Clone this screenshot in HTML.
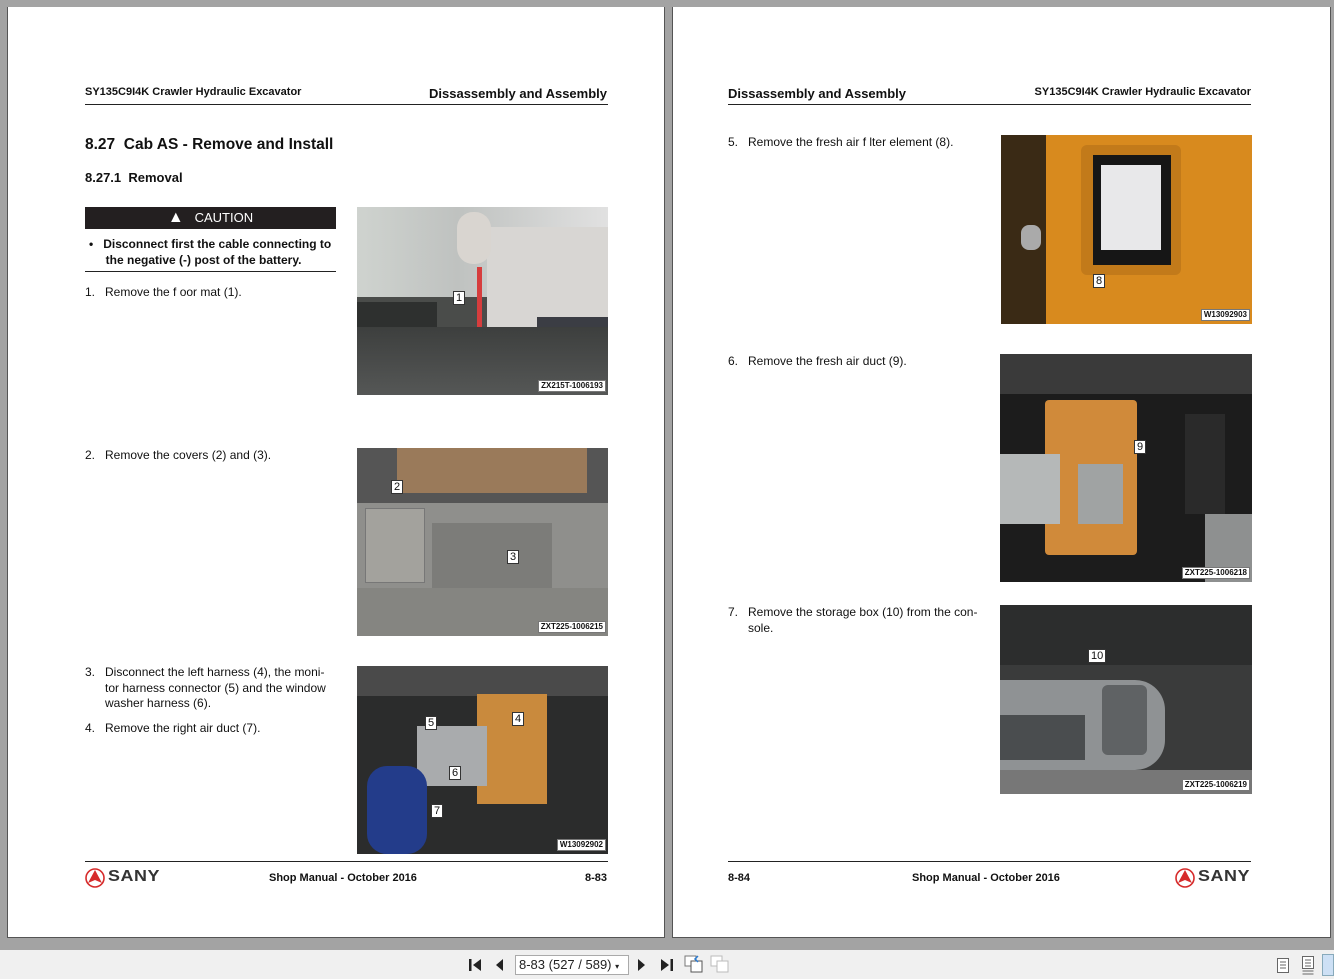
<!DOCTYPE html>
<html><head><meta charset="utf-8"><style>
*{margin:0;padding:0;box-sizing:border-box}
body{width:1334px;height:979px;background:#a3a3a3;font-family:"Liberation Sans",Arial,sans-serif;position:relative;overflow:hidden;color:#111}
.page{position:absolute;top:7px;height:931px;background:#fff;border:1px solid #555;border-top:none}
.a{position:absolute}
.hdr{font-size:11px;font-weight:bold}
.hdr2{font-size:13px;font-weight:bold}
.rule{position:absolute;height:1px;background:#222}
.t{position:absolute;font-size:12px;line-height:15.5px}
.ph{position:absolute;overflow:hidden}
.lbl{position:absolute;background:#fff;font-size:8px;padding:0 2px;border:1px solid #777;line-height:10px;font-weight:bold}
.num{position:absolute;background:#fff;font-size:11px;padding:0 2px;line-height:12px;border:1px solid #333}
.b{position:absolute}
.tb{position:absolute;left:0;top:950px;width:1334px;height:29px;background:#f0f0f0}
.sany{position:absolute;font-size:16px;font-weight:bold;color:#333;letter-spacing:0.5px;transform:scaleX(1.12);transform-origin:left}
</style></head><body>

<div class="page" style="left:7px;width:658px">
 <div class="a hdr" style="left:77px;top:79px">SY135C9I4K Crawler Hydraulic Excavator</div>
 <div class="a hdr2" style="right:57px;top:79px">Dissassembly and Assembly</div>
 <div class="rule" style="left:77px;top:97px;width:523px"></div>
 <div class="a" style="left:77px;top:129px;font-size:15.5px;font-weight:bold">8.27&nbsp; Cab AS - Remove and Install</div>
 <div class="a" style="left:77px;top:163px;font-size:13px;font-weight:bold">8.27.1&nbsp; Removal</div>
 <div class="a" style="left:77px;top:200px;width:251px;height:22px;background:#231f20;color:#fff;font-size:13px;text-align:center;line-height:22px"><span style="font-size:16px">&#9650;</span>&nbsp;&nbsp; CAUTION</div>
 <div class="a" style="left:81px;top:229px;font-size:12px;font-weight:bold;line-height:16px">•&nbsp;&nbsp; Disconnect first the cable connecting to<br>&nbsp;&nbsp;&nbsp;&nbsp;&nbsp;the negative (-) post of the battery.</div>
 <div class="rule" style="left:77px;top:264px;width:251px"></div>
 <div class="t" style="left:77px;top:278px">1.&nbsp;&nbsp; Remove the f oor mat (1).</div>
 <div class="t" style="left:77px;top:441px">2.&nbsp;&nbsp; Remove the covers (2) and (3).</div>
 <div class="t" style="left:77px;top:658px">3.&nbsp;&nbsp; Disconnect the left harness (4), the moni-<br>&nbsp;&nbsp;&nbsp;&nbsp;&nbsp; tor harness connector (5) and the window<br>&nbsp;&nbsp;&nbsp;&nbsp;&nbsp; washer harness (6).</div>
 <div class="t" style="left:77px;top:714px">4.&nbsp;&nbsp; Remove the right air duct (7).</div>

 <div class="ph" style="left:349px;top:200px;width:251px;height:188px;background:#4a4c4a">
  <div class="b" style="left:0;top:0;width:251px;height:90px;background:linear-gradient(90deg,#cfd3cf,#bfc2c0 40%,#e1e1e1)"></div>
  <div class="b" style="left:130px;top:20px;width:121px;height:100px;background:#d8d6d3"></div>
  <div class="b" style="left:100px;top:5px;width:34px;height:52px;background:#d9d5d0;border-radius:16px"></div>
  <div class="b" style="left:120px;top:60px;width:5px;height:70px;background:#d63d3d"></div>
  <div class="b" style="left:180px;top:110px;width:71px;height:50px;background:#3b3d44"></div>
  <div class="b" style="left:0;top:95px;width:80px;height:80px;background:#2e302f"></div>
  <div class="b" style="left:0;top:120px;width:251px;height:68px;background:linear-gradient(#3d3f3e,#555756)"></div>
  <div class="num" style="left:96px;top:84px">1</div>
  <div class="lbl" style="right:2px;bottom:3px">ZX215T-1006193</div>
 </div>

 <div class="ph" style="left:349px;top:441px;width:251px;height:188px;background:#8f8f8c">
  <div class="b" style="left:0;top:0;width:251px;height:55px;background:#555"></div>
  <div class="b" style="left:40px;top:0;width:190px;height:45px;background:#9a7a5a"></div>
  <div class="b" style="left:8px;top:60px;width:60px;height:75px;background:#a3a29d;border:1px solid #777"></div>
  <div class="b" style="left:75px;top:75px;width:120px;height:70px;background:#7c7c79"></div>
  <div class="b" style="left:0;top:140px;width:251px;height:48px;background:#858581"></div>
  <div class="num" style="left:34px;top:32px">2</div>
  <div class="num" style="left:150px;top:102px">3</div>
  <div class="lbl" style="right:2px;bottom:3px">ZXT225-1006215</div>
 </div>

 <div class="ph" style="left:349px;top:659px;width:251px;height:188px;background:#2b2c2c">
  <div class="b" style="left:0;top:0;width:251px;height:30px;background:#4a4a4a"></div>
  <div class="b" style="left:120px;top:28px;width:70px;height:110px;background:#c98a3d"></div>
  <div class="b" style="left:60px;top:60px;width:70px;height:60px;background:#a9abad"></div>
  <div class="b" style="left:10px;top:100px;width:60px;height:88px;background:#233c8a;border-radius:20px"></div>
  <div class="num" style="left:68px;top:50px">5</div>
  <div class="num" style="left:155px;top:46px">4</div>
  <div class="num" style="left:92px;top:100px">6</div>
  <div class="num" style="left:74px;top:138px">7</div>
  <div class="lbl" style="right:2px;bottom:3px">W13092902</div>
 </div>

 <div class="rule" style="left:77px;top:854px;width:523px"></div>
 <svg class="a" style="left:77px;top:861px" width="20" height="20" viewBox="0 0 20 20"><circle cx="10" cy="10" r="9" fill="none" stroke="#d62b2b" stroke-width="1.6"/><path d="M10 2 L17 15 L10 12 L3 15 Z" fill="#d62b2b"/></svg>
 <div class="sany" style="left:100px;top:861px">SANY</div>
 <div class="a" style="left:261px;top:865px;font-size:11px;font-weight:bold">Shop Manual - October 2016</div>
 <div class="a" style="right:57px;top:865px;font-size:11px;font-weight:bold">8-83</div>
</div>

<div class="page" style="left:672px;width:659px">
 <div class="a hdr2" style="left:55px;top:79px">Dissassembly and Assembly</div>
 <div class="a hdr" style="right:79px;top:79px">SY135C9I4K Crawler Hydraulic Excavator</div>
 <div class="rule" style="left:55px;top:97px;width:523px"></div>
 <div class="t" style="left:55px;top:128px">5.&nbsp;&nbsp; Remove the fresh air f lter element (8).</div>
 <div class="t" style="left:55px;top:347px">6.&nbsp;&nbsp; Remove the fresh air duct (9).</div>
 <div class="t" style="left:55px;top:598px">7.&nbsp;&nbsp; Remove the storage box (10) from the con-<br>&nbsp;&nbsp;&nbsp;&nbsp;&nbsp; sole.</div>

 <div class="ph" style="left:328px;top:128px;width:251px;height:189px;background:#d88a1e">
  <div class="b" style="left:0;top:0;width:45px;height:189px;background:#3a2a15"></div>
  <div class="b" style="left:80px;top:10px;width:100px;height:130px;background:#c27a1a;border-radius:6px"></div>
  <div class="b" style="left:92px;top:20px;width:78px;height:110px;background:#161616"></div>
  <div class="b" style="left:100px;top:30px;width:60px;height:85px;background:#e8e8ea"></div>
  <div class="b" style="left:20px;top:90px;width:20px;height:25px;background:#aaa;border-radius:8px"></div>
  <div class="num" style="left:92px;top:139px">8</div>
  <div class="lbl" style="right:2px;bottom:3px">W13092903</div>
 </div>

 <div class="ph" style="left:327px;top:347px;width:252px;height:228px;background:#1c1c1c">
  <div class="b" style="left:0;top:0;width:252px;height:40px;background:#3a3a3a"></div>
  <div class="b" style="left:45px;top:46px;width:92px;height:155px;background:#d08a3a;border-radius:4px"></div>
  <div class="b" style="left:0;top:100px;width:60px;height:70px;background:#b5b8b8"></div>
  <div class="b" style="left:78px;top:110px;width:45px;height:60px;background:#a0a3a3"></div>
  <div class="b" style="left:185px;top:60px;width:40px;height:100px;background:#2a2a2a"></div>
  <div class="b" style="left:205px;top:160px;width:47px;height:68px;background:#8e9090"></div>
  <div class="num" style="left:134px;top:86px">9</div>
  <div class="lbl" style="right:2px;bottom:3px">ZXT225-1006218</div>
 </div>

 <div class="ph" style="left:327px;top:598px;width:252px;height:189px;background:#3a3b3b">
  <div class="b" style="left:0;top:0;width:252px;height:60px;background:#2c2d2d"></div>
  <div class="b" style="left:0;top:75px;width:165px;height:90px;background:#8f9294;border-radius:0 30px 30px 0"></div>
  <div class="b" style="left:102px;top:80px;width:45px;height:70px;background:#5f6264;border-radius:6px"></div>
  <div class="b" style="left:0;top:110px;width:85px;height:45px;background:#4a4d4f"></div>
  <div class="b" style="left:0;top:165px;width:252px;height:24px;background:#777"></div>
  <div class="num" style="left:88px;top:44px">10</div>
  <div class="lbl" style="right:2px;bottom:3px">ZXT225-1006219</div>
 </div>

 <div class="rule" style="left:55px;top:854px;width:523px"></div>
 <div class="a" style="left:55px;top:865px;font-size:11px;font-weight:bold">8-84</div>
 <div class="a" style="left:239px;top:865px;font-size:11px;font-weight:bold">Shop Manual - October 2016</div>
 <svg class="a" style="left:502px;top:861px" width="20" height="20" viewBox="0 0 20 20"><circle cx="10" cy="10" r="9" fill="none" stroke="#d62b2b" stroke-width="1.6"/><path d="M10 2 L17 15 L10 12 L3 15 Z" fill="#d62b2b"/></svg>
 <div class="sany" style="left:525px;top:861px">SANY</div>
</div>

<div class="tb">
 <svg class="a" style="left:468px;top:8px" width="14" height="14" viewBox="0 0 14 14"><rect x="1" y="1" width="2.5" height="12" fill="#222"/><path d="M13 1 L5 7 L13 13Z" fill="#222"/></svg>
 <svg class="a" style="left:494px;top:8px" width="10" height="14" viewBox="0 0 10 14"><path d="M9 1 L2 7 L9 13Z" fill="#222"/></svg>
 <div class="a" style="left:515px;top:5px;width:114px;height:20px;background:#fff;border:1px solid #aaa;font-size:13px;line-height:18px;padding-left:3px;color:#222">8-83 (527 / 589) <span style="font-size:8px">▾</span></div>
 <svg class="a" style="left:637px;top:8px" width="10" height="14" viewBox="0 0 10 14"><path d="M1 1 L8 7 L1 13Z" fill="#222"/></svg>
 <svg class="a" style="left:660px;top:8px" width="14" height="14" viewBox="0 0 14 14"><path d="M1 1 L9 7 L1 13Z" fill="#222"/><rect x="10.5" y="1" width="2.5" height="12" fill="#222"/></svg>
 <svg class="a" style="left:684px;top:5px" width="20" height="18" viewBox="0 0 20 18"><rect x="1" y="1" width="11" height="10" fill="#fff" stroke="#777"/><rect x="7" y="6" width="11" height="11" fill="#fff" stroke="#555"/><path d="M14 1 L11 4 L14 7" fill="none" stroke="#2a7ad0" stroke-width="1.5"/></svg>
 <svg class="a" style="left:710px;top:5px" width="20" height="18" viewBox="0 0 20 18"><rect x="1" y="1" width="11" height="10" fill="#fff" stroke="#bbb"/><rect x="7" y="6" width="11" height="11" fill="#fff" stroke="#bbb"/></svg>
 <svg class="a" style="left:1277px;top:8px" width="12" height="15" viewBox="0 0 12 15"><rect x="0.5" y="0.5" width="11" height="14" fill="#fff" stroke="#666"/><path d="M3 4h6M3 7h6M3 10h6" stroke="#666"/></svg>
 <svg class="a" style="left:1302px;top:6px" width="12" height="19" viewBox="0 0 12 19"><rect x="0.5" y="0.5" width="11" height="12" fill="#fff" stroke="#666"/><path d="M3 4h6M3 7h6M3 10h6M0.5 15h11M0.5 18h11" stroke="#666"/></svg>
 <div class="a" style="left:1322px;top:4px;width:12px;height:22px;background:#cde0f5;border:1px solid #8ab"></div>
</div>
</body></html>
